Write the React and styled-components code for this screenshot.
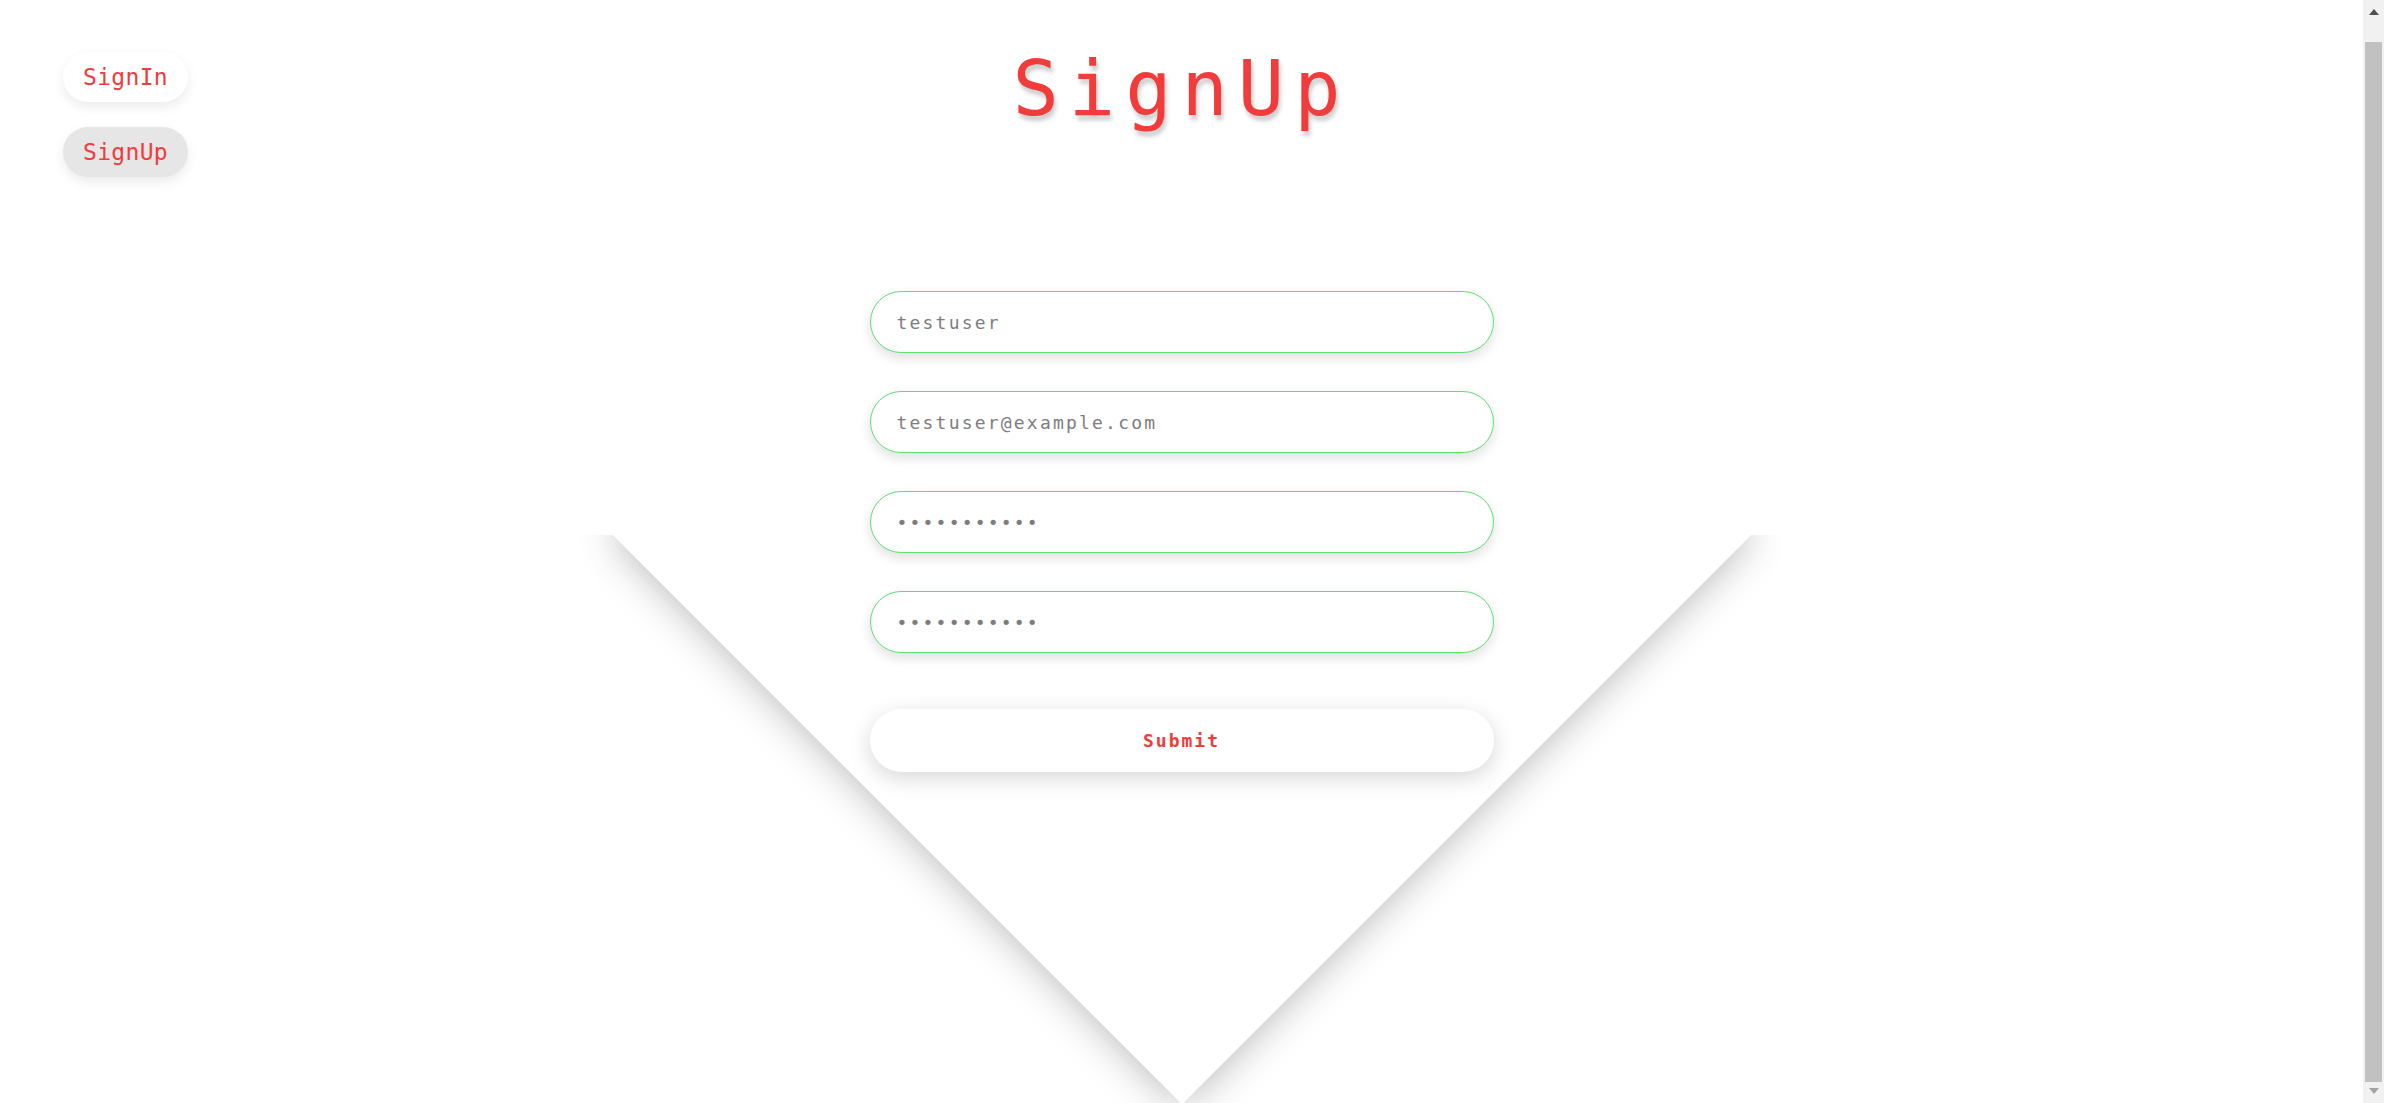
import React from "react";
import styled, { createGlobalStyle } from "styled-components";

const GlobalStyle = createGlobalStyle`
  html, body {
    margin: 0;
    padding: 0;
    background: #ffffff;
  }
  body {
    font-family: "DejaVu Sans Mono", "Liberation Mono", monospace;
  }
  * { box-sizing: border-box; }
`;

const RED = "#f23b3b";
const MONO = `"DejaVu Sans Mono", "Liberation Mono", monospace`;

const Page = styled.div`
  position: relative;
  min-height: 1103px;
  margin-right: 21px;
  display: grid;
  grid-template-columns: 1fr 624px 1fr;
  overflow: hidden;
`;

const Backdrop = styled.div`
  position: absolute;
  top: 535px;
  left: 0;
  right: 0;
  bottom: 0;
  overflow: hidden;
  z-index: 0;
  pointer-events: none;
`;

const Diamond = styled.div`
  position: absolute;
  left: 50%;
  top: 0;
  width: 805px;
  height: 805px;
  background: #ffffff;
  transform: translate(-50%, -50%) rotate(45deg);
  box-shadow: 0 0 42px rgba(0, 0, 0, 0.3);
`;

const Nav = styled.nav`
  position: relative;
  z-index: 1;
  display: flex;
  flex-direction: column;
  align-items: flex-start;
  gap: 25px;
  padding: 52px 0 0 63px;
`;

const NavPill = styled.button`
  width: 125px;
  height: 50px;
  border: none;
  border-radius: 25px;
  background: ${(p) => (p.$active ? "#e6e6e6" : "#ffffff")};
  color: ${RED};
  font-family: ${MONO};
  font-size: 23px;
  letter-spacing: 0.3px;
  box-shadow: 0 5px 12px rgba(0, 0, 0, 0.08);
  cursor: pointer;
  padding: 0;
`;

const Main = styled.main`
  position: relative;
  z-index: 1;
  display: flex;
  flex-direction: column;
  align-items: center;
  padding-top: 50px;
`;

const Title = styled.h1`
  margin: 0;
  font-family: ${MONO};
  font-weight: 400;
  font-size: 77px;
  line-height: 1;
  letter-spacing: 10px;
  color: ${RED};
  text-shadow: 2px 5px 4px rgba(0, 0, 0, 0.2);
  white-space: nowrap;
`;

const Form = styled.form`
  width: 100%;
  display: flex;
  flex-direction: column;
  gap: 38px;
  margin-top: 164px;
`;

const Field = styled.input`
  width: 100%;
  height: 62px;
  border: 1px solid #5ee06f;
  border-radius: 31px;
  background: #ffffff;
  padding: 0 26px;
  font-family: ${MONO};
  font-size: 18px;
  letter-spacing: 2.2px;
  color: #7d7d7d;
  outline: none;
  box-shadow: 0 5px 12px rgba(0, 0, 0, 0.12);
`;

const Submit = styled.button`
  width: 100%;
  height: 63px;
  margin-top: 18px;
  border: none;
  border-radius: 32px;
  background: #ffffff;
  color: ${RED};
  font-family: ${MONO};
  font-weight: 700;
  font-size: 18px;
  letter-spacing: 2px;
  box-shadow: 0 6px 22px rgba(0, 0, 0, 0.16);
  cursor: pointer;
`;

/* browser scrollbar, as it appears in the screenshot */
const ScrollTrack = styled.div`
  position: fixed;
  top: 0;
  right: 0;
  bottom: 0;
  width: 21px;
  background: #f1f1f1;
  display: flex;
  flex-direction: column;
  align-items: center;
  z-index: 5;
`;

const ScrollArrow = styled.div`
  height: 42px;
  width: 100%;
  display: flex;
  align-items: ${(p) => (p.$down ? "flex-start" : "flex-start")};
  justify-content: center;
  padding-top: ${(p) => (p.$down ? "10px" : "9px")};
  flex: none;
`;

const ScrollThumb = styled.div`
  flex: 1;
  width: 17px;
  background: #c1c1c1;
`;

export default function App() {
  return (
    <>
      <GlobalStyle />
      <Page>
        <Backdrop>
          <Diamond />
        </Backdrop>
        <Nav>
          <NavPill>SignIn</NavPill>
          <NavPill $active>SignUp</NavPill>
        </Nav>
        <Main>
          <Title>SignUp</Title>
          <Form onSubmit={(e) => e.preventDefault()}>
            <Field type="text" defaultValue="testuser" />
            <Field type="email" defaultValue="testuser@example.com" />
            <Field type="password" defaultValue="password123" />
            <Field type="password" defaultValue="password123" />
            <Submit type="submit">Submit</Submit>
          </Form>
        </Main>
        <div />
      </Page>
      <ScrollTrack aria-hidden="true">
        <ScrollArrow>
          <svg width="10" height="6" viewBox="0 0 10 6">
            <path d="M0 6 L5 0 L10 6 Z" fill="#505050" />
          </svg>
        </ScrollArrow>
        <ScrollThumb />
        <ScrollArrow $down style={{ height: "21px", paddingTop: "6px" }}>
          <svg width="10" height="6" viewBox="0 0 10 6">
            <path d="M0 0 L5 6 L10 0 Z" fill="#a3a3a3" />
          </svg>
        </ScrollArrow>
      </ScrollTrack>
    </>
  );
}
